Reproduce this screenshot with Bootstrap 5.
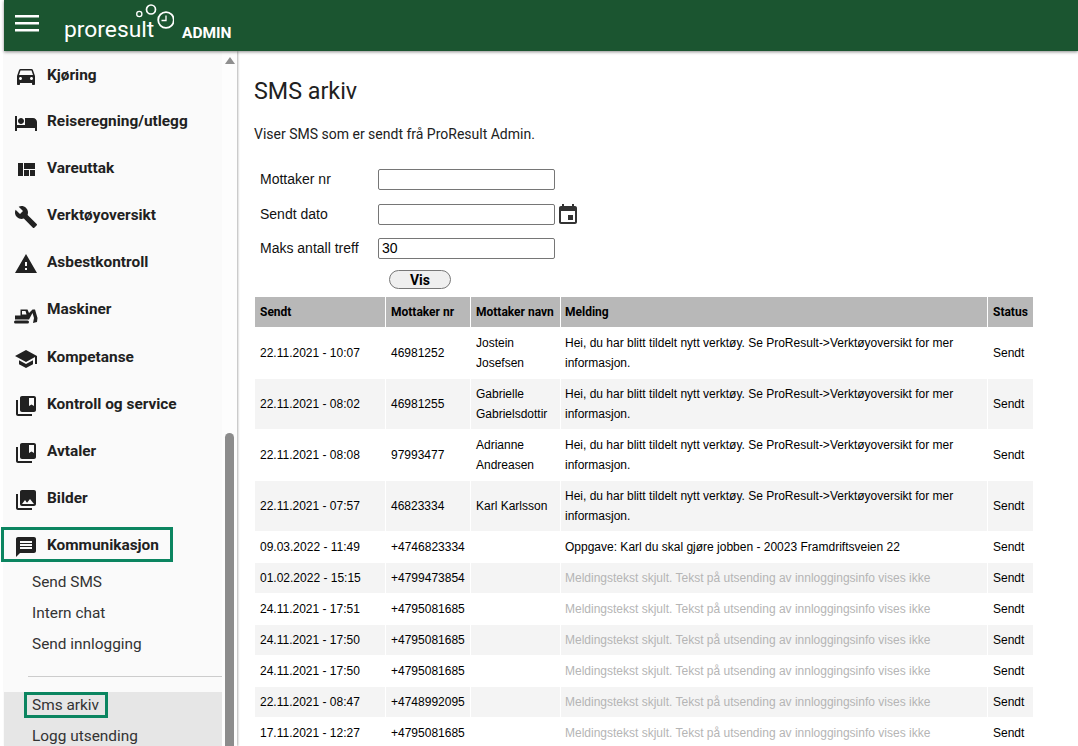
<!DOCTYPE html>
<html lang="no">
<head>
<meta charset="utf-8">
<title>SMS arkiv</title>
<link href="https://cdn.jsdelivr.net/npm/bootstrap@5.3.0/dist/css/bootstrap.min.css" rel="stylesheet">
<style>
html,body{height:746px;overflow:hidden;background:#fff;margin:0}
body{font-family:"Liberation Sans",Arial,sans-serif;color:#000;padding-left:4px;position:relative}
.pr-top{height:51px;background:#1b5530;box-shadow:0 1px 3px rgba(0,0,0,.45);position:relative;z-index:3;color:#fff}
.pr-burger{width:24px;margin-left:11px;margin-top:15px;height:17px;flex:none}
.pr-logo{margin-left:25px;width:110px;height:46px;margin-top:2px;flex:none}
.pr-logo-word{font:400 22.8px/1 Roboto,sans-serif;margin-top:19px;margin-left:-110px;width:110px;flex:none}
.pr-admin{font:700 15.5px/1 Roboto,sans-serif;margin-left:8px;margin-top:26px}
.pr-body{height:695px}
.pr-side{width:233px;flex:none;box-shadow:1px 0 2px rgba(0,0,0,.3);overflow:hidden;height:695px}
.pr-menu{width:218px;background:#fafafa;height:695px;flex:none;overflow:hidden}
.pr-track{width:15px;background:#fdfdfd;flex:none;padding:6px 3px 0}
.pr-arrow{width:0;height:0;border-left:5px solid transparent;border-right:5px solid transparent;border-bottom:7px solid #8f8f8f;margin:0 auto}
.pr-thumb{margin-top:369px;width:9px;height:320px;background:#8c8c8c;border-radius:5px 5px 0 0}
.pr-item{height:47.1px;font:700 15.4px/1 Roboto,sans-serif;color:#212121;padding-left:10px;gap:9px}
.pr-item svg{width:24px;height:24px;fill:#212121;flex:none;margin-top:3px}
.pr-item.pr-nudge{padding-top:2px}
.pr-item.pr-nudge svg{margin-top:1px}
.pr-sub{height:31px;font:400 15.4px/31px Roboto,sans-serif;color:#333;padding-left:28px}
.pr-sublist{margin-top:-2px}
.pr-rule{margin:16px 0 15px 24px;border-top:1px solid #ccc;height:0}
.pr-active{background:#e6e6e6}
.pr-active .pr-sub{position:relative;top:-2px}
.pr-ring{position:absolute;border:3px solid #0b8560;pointer-events:none;z-index:4}
.pr-ring-a{left:1px;top:527px;width:172px;height:35px}
.pr-ring-b{left:24px;top:692px;width:84px;height:26px}
.pr-main{padding:0 0 0 18px;flex:1;min-width:0}
.pr-title{font:400 23.3px/28px Roboto,sans-serif;margin:26px 0 0 -1px;color:#212121}
.pr-lead{font:400 14px/16px Roboto,sans-serif;margin:21px 0 0 -1px;color:#212121}
.pr-form{margin:27px 0 0 5px;font-size:14px}
.pr-frow{height:21px;margin-bottom:14px}
.pr-frow.tight{margin-bottom:13px}
.pr-frow label{width:118px;flex:none;font-size:14px;color:#111}
.pr-input{width:177px;height:21px;border:1px solid #767676;border-radius:2px;padding:0 3px 2px;font:14px "Liberation Sans",Arial,sans-serif;flex:none;color:#000;background:#fff}
.pr-cal{width:24px;height:24px;fill:#333;margin-left:1px;flex:none}
.pr-vis{display:block;margin:-3px 0 7px 129px;width:62px;height:19px;border:1px solid #767676;border-radius:10px;background:#efefef;font:700 14px/1 Roboto,sans-serif;padding:0;color:#000}
.pr-grid{border-collapse:separate;border-spacing:1px 1px;width:780px;margin-left:-1px;table-layout:fixed;font-size:12px}
.pr-grid th{background:#b8b8b8;font:700 12px/14px Roboto,sans-serif;height:30px;padding:0 5px;color:#000;white-space:nowrap}
.pr-grid td{padding:0 5px;height:30px;line-height:20px;vertical-align:middle;font-family:"Liberation Sans",Arial,sans-serif;color:#000}
.pr-grid th:nth-child(4),.pr-grid td:nth-child(4){padding-left:4px}
.pr-grid tr.two td{height:50px}
.pr-grid tbody tr:nth-child(even) td{background:#f4f4f4}
.pr-grid td.pr-hid{color:#b5b5b5}
</style>
</head>
<body>
<header class="pr-top d-flex align-items-start">
  <svg class="pr-burger" viewBox="0 0 24 17"><path fill="#fff" d="M0 0h24v2.600H0zM0 7h24v2.600H0zM0 14h24v2.600H0z"/></svg>
  <svg class="pr-logo" viewBox="0 0 110 46" fill="none" stroke="#fff"><circle cx="75.300" cy="12" r="2.600" stroke-width="1.300"/><circle cx="87" cy="7.500" r="4.500" stroke-width="1.700"/><circle cx="102" cy="18" r="7.800" stroke-width="1.800"/><path d="M102 13.500V18.500H97.500" stroke-width="1.300"/></svg>
  <div class="pr-logo-word">proresult</div>
  <div class="pr-admin">ADMIN</div>
</header>
<div class="pr-body d-flex">
  <aside class="pr-side d-flex">
    <nav class="pr-menu">
      <div class="pr-item pr-nudge d-flex align-items-center"><svg viewBox="0 0 24 24"><path d="M18.920 6.010C18.720 5.420 18.160 5 17.500 5h-11c-.66 0-1.210.42-1.420 1.010L3 12v8c0 .55.45 1 1 1h1c.55 0 1-.45 1-1v-1h12v1c0 .55.45 1 1 1h1c.55 0 1-.45 1-1v-8l-2.080-5.990zM6.500 16c-.83 0-1.500-.67-1.500-1.500S5.670 13 6.500 13s1.500.67 1.500 1.500S7.330 16 6.500 16zm11 0c-.83 0-1.500-.67-1.500-1.500s.67-1.500 1.500-1.500 1.500.67 1.500 1.500-.67 1.500-1.500 1.500zM5 11l1.500-4.500h11L19 11H5z"/></svg>Kjøring</div>
      <div class="pr-item d-flex align-items-center"><svg viewBox="0 0 24 24"><path d="M7 13c1.660 0 3-1.340 3-3S8.660 7 7 7s-3 1.340-3 3 1.340 3 3 3zm12-6h-8v7H3V5H1v15h2v-3h18v3h2v-9c0-2.210-1.790-4-4-4z"/></svg>Reiseregning/utlegg</div>
      <div class="pr-item d-flex align-items-center"><svg viewBox="0 0 24 24"><path d="M10 18h5v-6h-5v6zm-6 0h5V5H4v13zm12 0h5v-6h-5v6zM10 5v6h11V5H10z"/></svg>Vareuttak</div>
      <div class="pr-item d-flex align-items-center"><svg viewBox="0 0 24 24"><path d="M22.700 19l-9.100-9.100c.9-2.300.4-5-1.500-6.900-2-2-5-2.400-7.400-1.300L9 6 6 9 1.600 4.700C.4 7.100.9 10.100 2.900 12.100c1.900 1.900 4.600 2.400 6.900 1.500l9.100 9.100c.4.4 1 .4 1.400 0l2.300-2.300c.5-.4.5-1.100.1-1.400z"/></svg>Verktøyoversikt</div>
      <div class="pr-item d-flex align-items-center"><svg viewBox="0 0 24 24"><path d="M1 21h22L12 2 1 21zm12-3h-2v-2h2v2zm0-4h-2v-4h2v4z"/></svg>Asbestkontroll</div>
      <div class="pr-item d-flex align-items-center"><svg viewBox="0 0 24 24"><path fill-rule="evenodd" d="M1.500 20.500h12a1.500 1.500 0 0 1 0 3h-12a1.500 1.500 0 0 1 0-3zM1 15.500h5.500v-6h7l1.500 3.500 3.500-3.500h2.500l2.500 8.500-.5 4-4 1 1-5-1.500-5L15 19.500H1zM8 11v3.500h4.500l-1-3.500z"/></svg>Maskiner</div>
      <div class="pr-item pr-nudge d-flex align-items-center"><svg viewBox="0 0 24 24"><path d="M5 13.180v4L12 21l7-3.820v-4L12 17l-7-3.820zM12 3L1 9l11 6 9-4.910V17h2V9L12 3z"/></svg>Kompetanse</div>
      <div class="pr-item d-flex align-items-center"><svg viewBox="0 0 24 24"><path d="M4 6H2v14c0 1.100.9 2 2 2h14v-2H4V6zm16-4H8c-1.100 0-2 .9-2 2v12c0 1.100.9 2 2 2h12c1.100 0 2-.9 2-2V4c0-1.100-.9-2-2-2zm0 10l-2.500-1.500L15 12V4h5v8z"/></svg>Kontroll og service</div>
      <div class="pr-item d-flex align-items-center"><svg viewBox="0 0 24 24"><path d="M4 6H2v14c0 1.100.9 2 2 2h14v-2H4V6zm16-4H8c-1.100 0-2 .9-2 2v12c0 1.100.9 2 2 2h12c1.100 0 2-.9 2-2V4c0-1.100-.9-2-2-2zm0 10l-2.500-1.500L15 12V4h5v8z"/></svg>Avtaler</div>
      <div class="pr-item d-flex align-items-center"><svg viewBox="0 0 24 24"><path d="M22 16V4c0-1.100-.9-2-2-2H8c-1.100 0-2 .9-2 2v12c0 1.100.9 2 2 2h12c1.100 0 2-.9 2-2zm-11-4l2.030 2.710L16 11l4 5H8l3-4zM2 6v14c0 1.100.9 2 2 2h14v-2H4V6H2z"/></svg>Bilder</div>
      <div class="pr-item d-flex align-items-center"><svg viewBox="0 0 24 24"><path d="M20 2H4c-1.100 0-1.990.9-1.990 2L2 22l4-4h14c1.100 0 2-.9 2-2V4c0-1.100-.9-2-2-2zm-2 12H6v-2h12v2zm0-3H6V9h12v2zm0-3H6V6h12v2z"/></svg>Kommunikasjon</div>
      <div class="pr-sublist">
        <div class="pr-sub">Send SMS</div>
        <div class="pr-sub">Intern chat</div>
        <div class="pr-sub">Send innlogging</div>
      </div>
      <div class="pr-rule"></div>
      <div class="pr-active">
        <div class="pr-sub">Sms arkiv</div>
        <div class="pr-sub">Logg utsending</div>
      </div>
    </nav>
    <div class="pr-track"><div class="pr-arrow"></div><div class="pr-thumb"></div></div>
  </aside>
  <main class="pr-main">
    <h1 class="pr-title">SMS arkiv</h1>
    <p class="pr-lead">Viser SMS som er sendt frå ProResult Admin.</p>
    <form class="pr-form">
      <div class="pr-frow d-flex align-items-center"><label>Mottaker nr</label><input class="pr-input" type="text"></div>
      <div class="pr-frow tight d-flex align-items-center"><label>Sendt dato</label><input class="pr-input" type="text"><svg class="pr-cal" viewBox="0 0 24 24"><path d="M17 12h-5v5h5v-5zM16 1v2H8V1H6v2H5c-1.110 0-1.990.9-1.990 2L3 19c0 1.100.89 2 2 2h14c1.100 0 2-.9 2-2V5c0-1.100-.9-2-2-2h-1V1h-2zm3 18H5V8h14v11z"/></svg></div>
      <div class="pr-frow d-flex align-items-center"><label>Maks antall treff</label><input class="pr-input" type="text" value="30"></div>
      <button class="pr-vis" type="button">Vis</button>
    </form>
    <table class="pr-grid">
      <colgroup><col style="width:130px"><col style="width:84px"><col style="width:89px"><col style="width:426px"><col style="width:45px"></colgroup>
      <thead><tr><th>Sendt</th><th>Mottaker nr</th><th>Mottaker navn</th><th>Melding</th><th>Status</th></tr></thead>
      <tbody>
        <tr class="two"><td>22.11.2021 - 10:07</td><td>46981252</td><td>Jostein Josefsen</td><td>Hei, du har blitt tildelt nytt verktøy. Se ProResult-&gt;Verktøyoversikt for mer informasjon.</td><td>Sendt</td></tr>
        <tr class="two"><td>22.11.2021 - 08:02</td><td>46981255</td><td>Gabrielle Gabrielsdottir</td><td>Hei, du har blitt tildelt nytt verktøy. Se ProResult-&gt;Verktøyoversikt for mer informasjon.</td><td>Sendt</td></tr>
        <tr class="two"><td>22.11.2021 - 08:08</td><td>97993477</td><td>Adrianne Andreasen</td><td>Hei, du har blitt tildelt nytt verktøy. Se ProResult-&gt;Verktøyoversikt for mer informasjon.</td><td>Sendt</td></tr>
        <tr class="two"><td>22.11.2021 - 07:57</td><td>46823334</td><td>Karl Karlsson</td><td>Hei, du har blitt tildelt nytt verktøy. Se ProResult-&gt;Verktøyoversikt for mer informasjon.</td><td>Sendt</td></tr>
        <tr><td>09.03.2022 - 11:49</td><td>+4746823334</td><td></td><td>Oppgave: Karl du skal gjøre jobben - 20023 Framdriftsveien 22</td><td>Sendt</td></tr>
        <tr><td>01.02.2022 - 15:15</td><td>+4799473854</td><td></td><td class="pr-hid">Meldingstekst skjult. Tekst på utsending av innloggingsinfo vises ikke</td><td>Sendt</td></tr>
        <tr><td>24.11.2021 - 17:51</td><td>+4795081685</td><td></td><td class="pr-hid">Meldingstekst skjult. Tekst på utsending av innloggingsinfo vises ikke</td><td>Sendt</td></tr>
        <tr><td>24.11.2021 - 17:50</td><td>+4795081685</td><td></td><td class="pr-hid">Meldingstekst skjult. Tekst på utsending av innloggingsinfo vises ikke</td><td>Sendt</td></tr>
        <tr><td>24.11.2021 - 17:50</td><td>+4795081685</td><td></td><td class="pr-hid">Meldingstekst skjult. Tekst på utsending av innloggingsinfo vises ikke</td><td>Sendt</td></tr>
        <tr><td>22.11.2021 - 08:47</td><td>+4748992095</td><td></td><td class="pr-hid">Meldingstekst skjult. Tekst på utsending av innloggingsinfo vises ikke</td><td>Sendt</td></tr>
        <tr><td>17.11.2021 - 12:27</td><td>+4795081685</td><td></td><td class="pr-hid">Meldingstekst skjult. Tekst på utsending av innloggingsinfo vises ikke</td><td>Sendt</td></tr>
      </tbody>
    </table>
  </main>
</div>
<div class="pr-ring pr-ring-a"></div>
<div class="pr-ring pr-ring-b"></div>
<script src="https://cdn.jsdelivr.net/npm/bootstrap@5.3.0/dist/js/bootstrap.bundle.min.js"></script>
</body>
</html>
